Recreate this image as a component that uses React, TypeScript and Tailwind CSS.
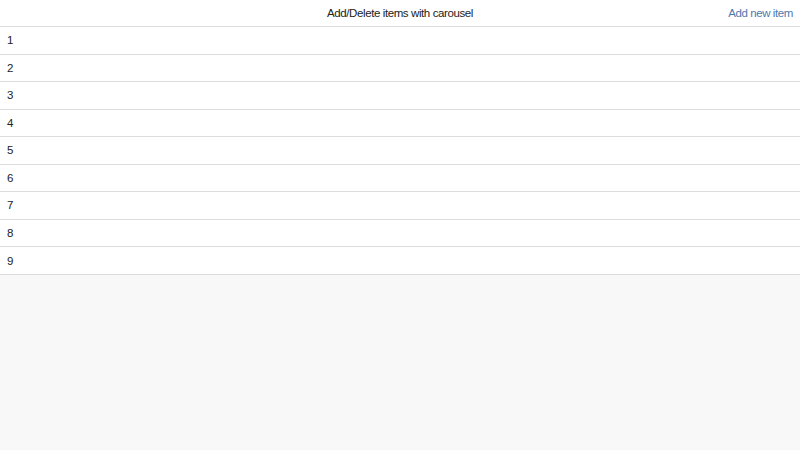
export default function App() {
  const items = [1, 2, 3, 4, 5, 6, 7, 8, 9];
  return (
    <div className="w-[800px] h-[450px] bg-[#f8f8f8] flex flex-col text-[11.5px] tracking-[-0.4px] text-[#222]" style={{ fontFamily: '"Liberation Sans", Arial, sans-serif' }}>
      <div className="h-[27px] shrink-0 bg-white border-b border-[#dcdcdc] flex items-center relative pt-px">
        <div className="flex-1 text-center">Add/Delete items with carousel</div>
        <a className="absolute right-[7px] top-0 h-full flex items-center pt-px text-[#4f79ae]">Add new item</a>
      </div>
      <div className="flex flex-col bg-white">
        {items.map((n) => (
          <div key={n} className="h-[27.55px] border-b border-[#dcdcdc] flex items-center pl-[7px] pt-px box-border">
            {n}
          </div>
        ))}
      </div>
    </div>
  );
}
